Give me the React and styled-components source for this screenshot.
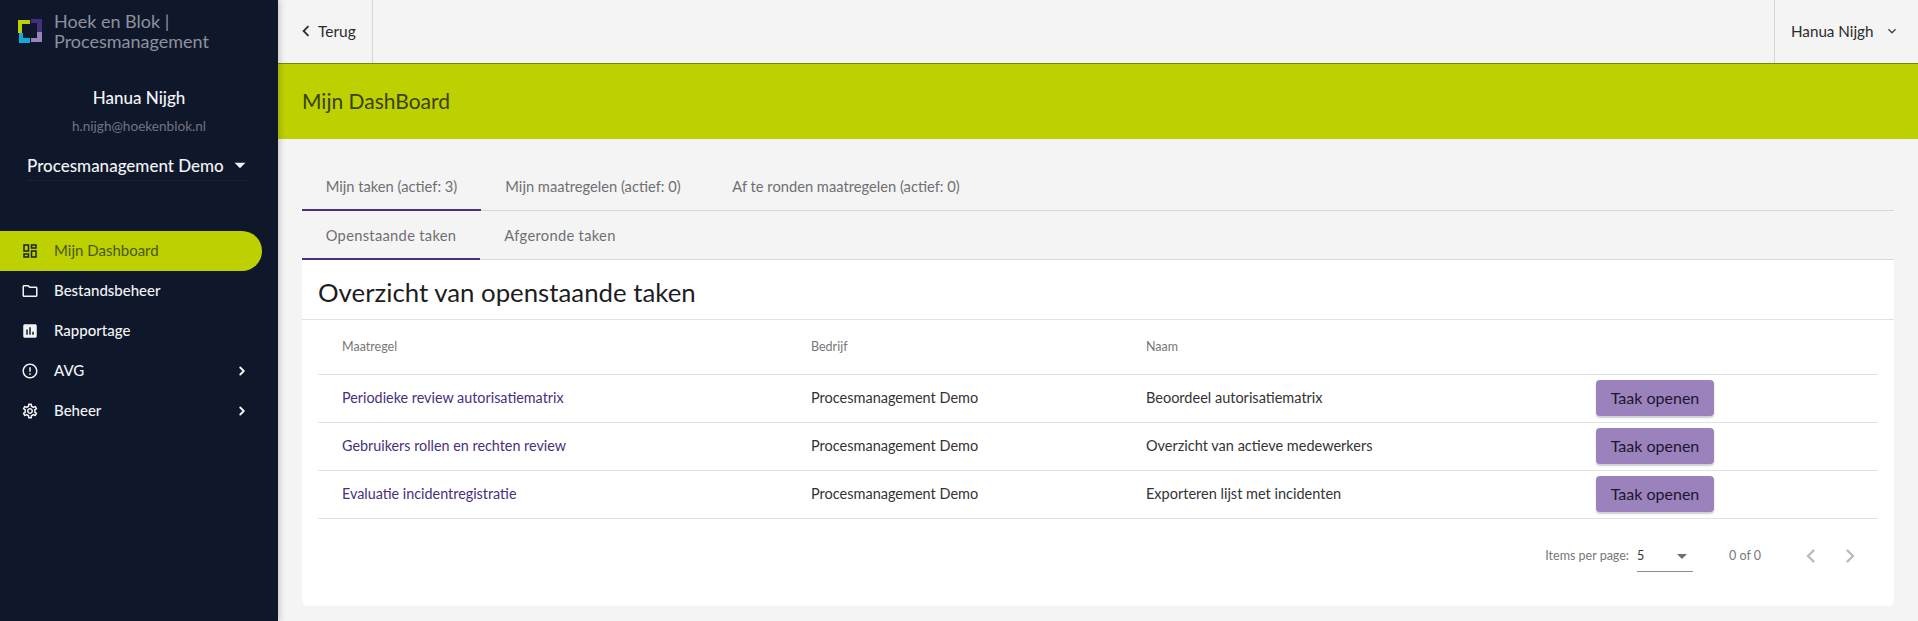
import React from "react";
import styled, { createGlobalStyle } from "styled-components";
import {
  MdOutlineDashboard,
  MdOutlineFolder,
  MdAssessment,
  MdErrorOutline,
  MdOutlineSettings,
  MdChevronRight,
  MdChevronLeft,
  MdExpandMore,
  MdArrowDropDown,
} from "react-icons/md";
import { ChevronRight } from "lucide-react";

const GlobalStyle = createGlobalStyle`
  html, body {
    margin: 0;
    padding: 0;
    height: 100%;
    background: #f4f4f5;
    overflow: hidden;
  }
  * {
    box-sizing: border-box;
  }
  body {
    font-family: Lato, "Noto Sans", sans-serif;
    color: #2b2b2b;
  }
`;

const Shell = styled.div`
  display: flex;
  width: 1918px;
  height: 621px;
`;

const Sidebar = styled.aside`
  width: 278px;
  flex: none;
  background: #0f182b;
  box-shadow: 2px 0 6px rgba(0, 0, 0, 0.18);
  position: relative;
  z-index: 2;
`;

const Brand = styled.div`
  display: flex;
  align-items: center;
  gap: 12px;
  padding: 11px 0 0 18px;
`;

const BrandName = styled.div`
  font-size: 18px;
  line-height: 20px;
  color: #8d929d;
`;

const Profile = styled.div`
  margin-top: 35px;
  text-align: center;
`;

const ProfileName = styled.div`
  font-size: 17px;
  line-height: 24px;
  font-weight: 500;
  color: #f4f5f7;
`;

const ProfileMail = styled.div`
  margin-top: 6px;
  font-size: 13.6px;
  line-height: 20px;
  color: #6f7480;
`;

const CompanySelect = styled.div`
  display: flex;
  align-items: center;
  justify-content: space-between;
  margin: 14px 30px 0 27px;
  height: 31px;
  font-size: 17px;
  font-weight: 500;
  white-space: nowrap;
  color: #f2f3f5;
  border-bottom: 1px solid #182235;
  svg {
    margin-right: -5px;
    flex: none;
  }
`;

const Nav = styled.nav`
  margin-top: 50px;
  display: flex;
  flex-direction: column;
`;

const NavItem = styled.div`
  display: flex;
  align-items: center;
  width: 262px;
  height: 40px;
  padding: 0 13px 0 21px;
  border-radius: 0 20px 20px 0;
  font-size: 15px;
  background: ${(p) => (p.$active ? "#bdd000" : "transparent")};
  color: ${(p) => (p.$active ? "#4c5613" : "#f2f3f5")};
  font-weight: ${(p) => (p.$active ? 400 : 500)};
`;

const NavIcon = styled.span`
  display: flex;
  width: 33px;
  flex: none;
  font-size: 18px;
  color: ${(p) => (p.$active ? "#1a2320" : "#f2f3f5")};
`;

const NavLabel = styled.span`
  flex: 1;
  padding-bottom: 2px;
`;

const Main = styled.main`
  flex: 1;
  min-width: 0;
  display: flex;
  flex-direction: column;
`;

const Topbar = styled.header`
  display: flex;
  justify-content: space-between;
  height: 64px;
  border-bottom: 1px solid #79860d;
`;

const BackButton = styled.div`
  display: flex;
  align-items: center;
  gap: 1px;
  width: 95px;
  padding: 0 0 2px 17px;
  font-size: 15.5px;
  border-right: 1px solid #d6d6d8;
`;

const UserMenu = styled.div`
  display: flex;
  align-items: center;
  width: 144px;
  padding: 0 0 2px 16px;
  font-size: 15.2px;
  border-left: 1px solid #d6d6d8;
  svg {
    margin-left: 11px;
    color: #444;
  }
`;

const Banner = styled.div`
  height: 75px;
  display: flex;
  align-items: center;
  padding: 0 0 3px 24px;
  background: #bdd000;
  font-size: 21px;
  color: #3a4010;
`;

const Content = styled.div`
  padding: 23px 24px 0;
`;

const TabRow = styled.div`
  display: flex;
  height: 49px;
  border-bottom: 1px solid #d9d9db;
`;

const Tab = styled.div`
  display: flex;
  align-items: center;
  justify-content: center;
  width: ${(p) => p.$width}px;
  height: 49px;
  font-size: 14.7px;
  letter-spacing: ${(p) => (p.$spaced ? "0.3px" : "0")};
  color: #6f6f72;
  border-bottom: 2px solid ${(p) => (p.$active ? "#4a2f7f" : "transparent")};
`;

const Card = styled.section`
  height: 346px;
  padding: 0 16px;
  background: #fff;
  border-radius: 0 0 6px 6px;
`;

const CardTitle = styled.h2`
  margin: 0 -16px;
  padding: 5px 16px 0;
  height: 60px;
  display: flex;
  align-items: center;
  font-size: 25.8px;
  font-weight: 400;
  color: #1d1d1f;
  border-bottom: 1px solid #e2e2e4;
`;

const Row = styled.div`
  display: grid;
  grid-template-columns: 469px 335px 450px 1fr;
  align-items: center;
  height: ${(p) => (p.$head ? "55px" : "48px")};
  padding-left: 24px;
  border-bottom: 1px solid #e0e0e2;
`;

const HeadCell = styled.div`
  padding-bottom: 2px;
  font-size: 12.5px;
  color: #77777a;
`;

const Cell = styled.div`
  padding-bottom: 3px;
  font-size: ${(p) => (p.$link ? "14.35px" : "14.5px")};
  color: ${(p) => (p.$link ? "#4a2f7f" : "#333335")};
`;

const ActionCell = styled.div`
  display: flex;
  padding-bottom: 1px;
`;

const OpenButton = styled.button`
  width: 118px;
  height: 36px;
  padding: 0 0 2px;
  border: 0;
  border-radius: 4px;
  background: #9b82bc;
  font-family: inherit;
  font-size: 16px;
  color: #1d1530;
  box-shadow: 0 2px 2px rgba(0, 0, 0, 0.2);
`;

const Paginator = styled.div`
  display: flex;
  align-items: center;
  justify-content: flex-end;
  height: 73px;
  padding-right: 14px;
  font-size: 12.5px;
  color: #77777a;
`;

const PageSize = styled.div`
  display: flex;
  align-items: center;
  justify-content: space-between;
  width: 56px;
  height: 28px;
  margin: 5px 36px 0 8px;
  padding-bottom: 4px;
  color: #333;
  border-bottom: 1px solid #8d8d8f;
  svg {
    margin-right: -1px;
    color: #6f6f72;
  }
`;

const PageArrow = styled.span`
  display: flex;
  margin-left: ${(p) => p.$gap}px;
  font-size: 28px;
  color: #bcbcbe;
`;

const Logo = () => (
  <svg width="24" height="24" viewBox="0 0 24 24" style={{ flex: "none" }}>
    <path d="M0 1h12v4H4v9H0z" fill="#bdd000" />
    <path d="M13 0h11v13h-5V4h-6z" fill="#46307d" />
    <path d="M19 13h5v10H13v-4h6z" fill="#9b82bc" />
    <path d="M1 14h4v5h7v5H1z" fill="#13a8dc" />
  </svg>
);

const navItems = [
  { label: "Mijn Dashboard", icon: MdOutlineDashboard, active: true },
  { label: "Bestandsbeheer", icon: MdOutlineFolder },
  { label: "Rapportage", icon: MdAssessment },
  { label: "AVG", icon: MdErrorOutline, more: true },
  { label: "Beheer", icon: MdOutlineSettings, more: true },
];

const tasks = [
  ["Periodieke review autorisatiematrix", "Beoordeel autorisatiematrix"],
  ["Gebruikers rollen en rechten review", "Overzicht van actieve medewerkers"],
  ["Evaluatie incidentregistratie", "Exporteren lijst met incidenten"],
];

export default function App() {
  return (
    <Shell>
      <GlobalStyle />
      <Sidebar>
        <Brand>
          <Logo />
          <BrandName>
            Hoek en Blok |
            <br />
            Procesmanagement
          </BrandName>
        </Brand>
        <Profile>
          <ProfileName>Hanua Nijgh</ProfileName>
          <ProfileMail>h.nijgh@hoekenblok.nl</ProfileMail>
        </Profile>
        <CompanySelect>
          Procesmanagement Demo
          <MdArrowDropDown size={26} />
        </CompanySelect>
        <Nav>
          {navItems.map(({ label, icon: Icon, active, more }) => (
            <NavItem key={label} $active={active}>
              <NavIcon $active={active}>
                <Icon />
              </NavIcon>
              <NavLabel>{label}</NavLabel>
              {more && <ChevronRight size={14} strokeWidth={3.2} />}
            </NavItem>
          ))}
        </Nav>
      </Sidebar>
      <Main>
        <Topbar>
          <BackButton>
            <MdChevronLeft size={22} />
            Terug
          </BackButton>
          <UserMenu>
            Hanua Nijgh
            <MdExpandMore size={16} />
          </UserMenu>
        </Topbar>
        <Banner>Mijn DashBoard</Banner>
        <Content>
          <TabRow>
            <Tab $width={179} $active>Mijn taken (actief: 3)</Tab>
            <Tab $width={224}>Mijn maatregelen (actief: 0)</Tab>
            <Tab $width={282}>Af te ronden maatregelen (actief: 0)</Tab>
          </TabRow>
          <TabRow>
            <Tab $width={178} $active $spaced>Openstaande taken</Tab>
            <Tab $width={160} $spaced>Afgeronde taken</Tab>
          </TabRow>
          <Card>
            <CardTitle>Overzicht van openstaande taken</CardTitle>
            <Row $head>
              <HeadCell>Maatregel</HeadCell>
              <HeadCell>Bedrijf</HeadCell>
              <HeadCell>Naam</HeadCell>
            </Row>
            {tasks.map(([measure, name]) => (
              <Row key={measure}>
                <Cell $link>{measure}</Cell>
                <Cell>Procesmanagement Demo</Cell>
                <Cell>{name}</Cell>
                <ActionCell>
                  <OpenButton>Taak openen</OpenButton>
                </ActionCell>
              </Row>
            ))}
            <Paginator>
              Items per page:
              <PageSize>
                5
                <MdArrowDropDown size={24} />
              </PageSize>
              0 of 0
              <PageArrow $gap={36}>
                <MdChevronLeft />
              </PageArrow>
              <PageArrow $gap={11}>
                <MdChevronRight />
              </PageArrow>
            </Paginator>
          </Card>
        </Content>
      </Main>
    </Shell>
  );
}
